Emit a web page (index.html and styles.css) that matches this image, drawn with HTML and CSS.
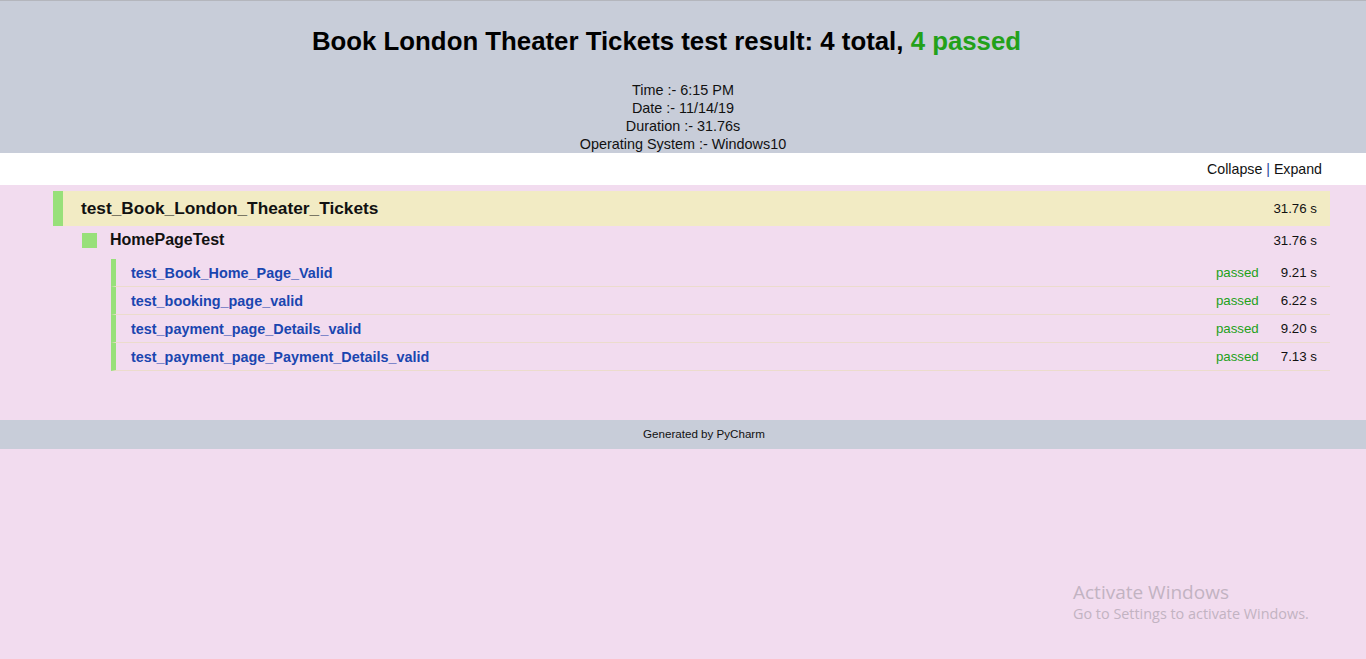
FILE: index.html
```html
<!DOCTYPE html>
<html>
<head>
<meta charset="utf-8">
<link rel="stylesheet" href="styles.css">
</head>
<body>
<div class="header">
  <h1 class="title">Book London Theater Tickets test result: 4 total, <span class="pass">4 passed</span></h1>
  <div class="info">
    <div>Time :- 6:15 PM</div>
    <div>Date :- 11/14/19</div>
    <div>Duration :- 31.76s</div>
    <div>Operating System :- Windows10</div>
  </div>
</div>
<div class="toolbar"><span class="link">Collapse</span> <span class="sep">|</span> <span class="link">Expand</span></div>
<div class="main">
  <div class="suite">
    <div class="suite-row">
      <span class="suite-name">test_Book_London_Theater_Tickets</span>
      <span class="time">31.76 s</span>
    </div>
    <div class="class-row">
      <span class="square"></span>
      <span class="class-name">HomePageTest</span>
      <span class="time">31.76 s</span>
    </div>
    <div class="tests">
      <div class="test-row"><span class="test-name">test_Book_Home_Page_Valid</span><span class="status">passed</span><span class="time">9.21 s</span></div>
      <div class="test-row"><span class="test-name">test_booking_page_valid</span><span class="status">passed</span><span class="time">6.22 s</span></div>
      <div class="test-row"><span class="test-name">test_payment_page_Details_valid</span><span class="status">passed</span><span class="time">9.20 s</span></div>
      <div class="test-row"><span class="test-name">test_payment_page_Payment_Details_valid</span><span class="status">passed</span><span class="time">7.13 s</span></div>
    </div>
  </div>
  <div class="footer">Generated by PyCharm</div>
  <div class="watermark">
    <div class="wm-title">Activate Windows</div>
    <div class="wm-sub">Go to Settings to activate Windows.</div>
  </div>
</div>
</body>
</html>
```

FILE: styles.css
```css
html, body {
  margin: 0;
  padding: 0;
  height: 100%;
}
body {
  font-family: "Liberation Sans", Arial, sans-serif;
  background: #f2dcef;
  color: #000;
  overflow: hidden;
}
.header {
  background: #c8cdd9;
  border-top: 1px solid #b4b6bd;
  height: 153px;
  box-sizing: border-box;
  text-align: center;
  padding-top: 24px;
}
.title {
  margin: 0;
  padding-right: 33px;
  font-size: 25.8px;
  font-weight: bold;
  line-height: 32px;
  color: #000;
}
.pass {
  color: #23a11a;
}
.info {
  margin-top: 24px;
  font-size: 14.4px;
  line-height: 18px;
  color: #111;
}
.toolbar {
  background: #fff;
  height: 32px;
  box-sizing: border-box;
  text-align: right;
  padding-right: 44px;
  padding-top: 8px;
  font-size: 14.2px;
  line-height: 17px;
  color: #111;
}
.sep {
  color: #2a4a9c;
}
.main {
  position: relative;
  height: calc(100% - 185px);
  padding-top: 6px;
  box-sizing: border-box;
}
.suite {
  margin-left: 53px;
  margin-right: 36px;
}
.suite-row {
  display: flex;
  align-items: center;
  height: 35px;
  background: #f2ebc4;
  border-left: 10px solid #98e07a;
  padding-left: 18px;
  padding-right: 13px;
}
.suite-name {
  flex: 1;
  font-size: 17.3px;
  font-weight: bold;
  color: #111;
}
.time {
  font-size: 13.3px;
  color: #111;
}
.class-row {
  display: flex;
  align-items: center;
  height: 28px;
  padding-left: 29px;
  padding-right: 13px;
}
.square {
  width: 15px;
  height: 15px;
  background: #98e07a;
  margin-right: 13px;
}
.class-name {
  flex: 1;
  font-size: 16px;
  font-weight: bold;
  color: #111;
}
.tests {
  margin-left: 58px;
  margin-top: 5px;
}
.test-row {
  display: flex;
  align-items: center;
  height: 27px;
  border-left: 5px solid #98e07a;
  border-bottom: 1px solid #ecdccc;
  padding-left: 15px;
  padding-right: 13px;
}
.test-name {
  flex: 1;
  font-size: 14.4px;
  font-weight: bold;
  color: #1a46b0;
}
.status {
  font-size: 13.3px;
  color: #23a11a;
  margin-right: 22px;
}
.footer {
  margin-top: 49px;
  background: #c8cdd9;
  height: 29px;
  line-height: 28px;
  text-align: center;
  font-size: 11.6px;
  padding-left: 42px;
  color: #111;
}
.watermark {
  position: absolute;
  left: 1073px;
  top: 395px;
  color: #c2b3c2;
  font-family: "Open Sans", "Noto Sans", sans-serif;
}
.wm-title {
  font-size: 19px;
  line-height: 24px;
}
.wm-sub {
  font-size: 14.4px;
  line-height: 20px;
}
```
